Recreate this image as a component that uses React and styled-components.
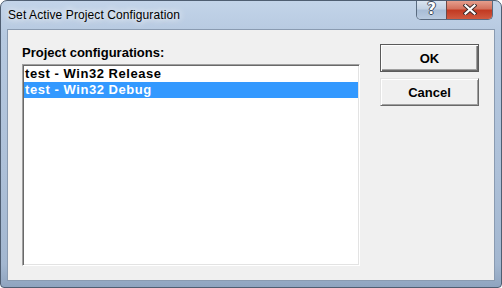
import React from 'react';
import styled, { createGlobalStyle } from 'styled-components';

const GlobalStyle = createGlobalStyle`
  html, body {
    margin: 0;
    padding: 0;
    background: #ffffff;
  }
  body {
    font-family: "Liberation Sans", Arial, sans-serif;
  }
`;

const Window = styled.div`
  box-sizing: border-box;
  width: 502px;
  height: 288px;
  display: flex;
  flex-direction: column;
  border: 1px solid #4f5e72;
  border-radius: 7px 7px 4px 4px;
  overflow: hidden;
  background: linear-gradient(180deg, #c3d4e9 0%, #b6c9e0 12%, #adc0d8 60%, #a3b7d0 92%, #8fa4bf 100%);
`;

const TitleBar = styled.div`
  height: 28px;
  display: flex;
  align-items: flex-start;
  flex: 0 0 auto;
`;

const Title = styled.div`
  padding: 7px 0 0 7px;
  font-size: 12px;
  line-height: 15px;
  letter-spacing: 0.1px;
  color: #000;
  text-shadow: 0 0 6px rgba(255, 255, 255, 0.95), 0 0 10px rgba(255, 255, 255, 0.8);
`;

const Captions = styled.div`
  margin-left: auto;
  margin-right: 8px;
  margin-top: -1px;
  display: flex;
  border: 1px solid #5a6b80;
  border-top: none;
  border-radius: 0 0 5px 5px;
  overflow: hidden;
`;

const CaptionButton = styled.div`
  width: ${(p) => p.$w}px;
  height: 19px;
  display: flex;
  align-items: center;
  justify-content: center;
  box-sizing: border-box;
  background: ${(p) =>
    p.$close
      ? 'linear-gradient(180deg, #e8a493 0%, #d4735f 45%, #c23a22 55%, #d05a40 100%)'
      : 'linear-gradient(180deg, #dce6f2 0%, #c3d2e4 45%, #a9bdd6 55%, #b9cbe0 100%)'};
  border-left: ${(p) => (p.$close ? '1px solid #6b4a48' : 'none')};
  font-family: "DejaVu Sans", "Liberation Sans", sans-serif;
  font-weight: bold;
  font-size: 15px;
  line-height: 19px;
  color: #fff;
  text-shadow: -1px 0 #3c4a5c, 1px 0 #3c4a5c, 0 -1px #3c4a5c, 0 1px #3c4a5c;
`;

const Client = styled.div`
  flex: 1 1 auto;
  margin: 0 6px 6px 6px;
  border: 1px solid #8a9bb1;
  background: #f0f0f0;
  display: flex;
  align-items: flex-start;
  padding: 14px 0 0 14px;
`;

const LeftColumn = styled.div`
  width: 338px;
  display: flex;
  flex-direction: column;
`;

const Label = styled.div`
  margin-top: 1px;
  margin-bottom: 3px;
  font-size: 13px;
  line-height: 16px;
  font-weight: bold;
  color: #000;
`;

const ListBox = styled.div`
  box-sizing: border-box;
  height: 202px;
  background: #fff;
  border-style: solid;
  border-width: 1px;
  border-color: #a0a0a0 #ffffff #ffffff #a0a0a0;
  box-shadow: inset 1px 1px #696969, inset -1px -1px #e3e3e3;
  padding: 1px;
`;

const ListItem = styled.div`
  height: 16px;
  padding-left: 1px;
  font-size: 13px;
  line-height: 16px;
  font-weight: bold;
  letter-spacing: 0.55px;
  white-space: nowrap;
  color: ${(p) => (p.$selected ? '#ffffff' : '#000000')};
  background: ${(p) => (p.$selected ? '#3399ff' : 'transparent')};
`;

const ButtonColumn = styled.div`
  margin-left: 20px;
  display: flex;
  flex-direction: column;
  gap: 6px;
`;

const Button = styled.div`
  box-sizing: border-box;
  width: 99px;
  height: 28px;
  display: flex;
  align-items: center;
  justify-content: center;
  background: #f0f0f0;
  font-size: 13px;
  font-weight: bold;
  color: #000;
  border-style: solid;
  border-width: 1px;
  border-color: ${(p) => (p.$default ? '#5a5a5a' : '#e3e3e3 #696969 #696969 #e3e3e3')};
  box-shadow: ${(p) =>
    p.$default
      ? 'inset 1px 1px #ffffff, inset -1px -1px #696969, inset -2px -2px #a0a0a0'
      : 'inset 1px 1px #ffffff, inset -1px -1px #a0a0a0'};
`;

function CloseGlyph() {
  return (
    <svg width="14" height="11" viewBox="0 0 14 11">
      <path d="M2.5 1.5 L11.5 9.5 M11.5 1.5 L2.5 9.5" stroke="#3a2a2a" strokeWidth="4" strokeLinecap="square" />
      <path d="M2.5 1.5 L11.5 9.5 M11.5 1.5 L2.5 9.5" stroke="#ffffff" strokeWidth="2.2" strokeLinecap="square" />
    </svg>
  );
}

export default function App() {
  return (
    <>
      <GlobalStyle />
      <Window>
        <TitleBar>
          <Title>Set Active Project Configuration</Title>
          <Captions>
            <CaptionButton $w={29}>?</CaptionButton>
            <CaptionButton $w={46} $close>
              <CloseGlyph />
            </CaptionButton>
          </Captions>
        </TitleBar>
        <Client>
          <LeftColumn>
            <Label>Project configurations:</Label>
            <ListBox>
              <ListItem>test - Win32 Release</ListItem>
              <ListItem $selected>test - Win32 Debug</ListItem>
            </ListBox>
          </LeftColumn>
          <ButtonColumn>
            <Button $default>OK</Button>
            <Button>Cancel</Button>
          </ButtonColumn>
        </Client>
      </Window>
    </>
  );
}
